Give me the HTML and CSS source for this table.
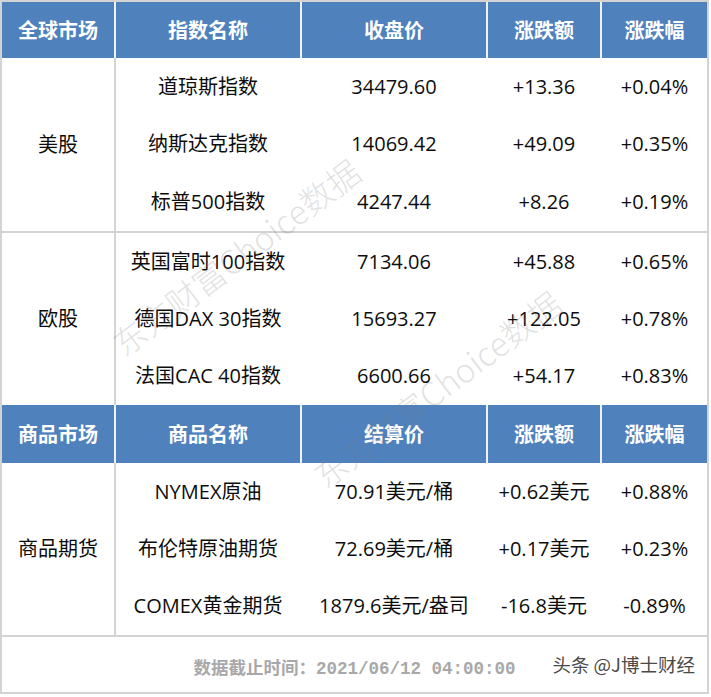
FILE: index.html
```html
<!DOCTYPE html>
<html lang="zh">
<head>
<meta charset="utf-8">
<title>全球市场</title>
<link rel="stylesheet" href="styles.css">
</head>
<body>
<div class="sheet">
  <div class="grid head">
    <div class="c">全球市场</div>
    <div class="c">指数名称</div>
    <div class="c">收盘价</div>
    <div class="c">涨跌额</div>
    <div class="c last">涨跌幅</div>
  </div>
  <div class="grid sec">
    <div class="c market">美股</div>
    <div class="c">道琼斯指数</div><div class="c">34479.60</div><div class="c">+13.36</div><div class="c last">+0.04%</div>
    <div class="c">纳斯达克指数</div><div class="c">14069.42</div><div class="c">+49.09</div><div class="c last">+0.35%</div>
    <div class="c">标普500指数</div><div class="c">4247.44</div><div class="c">+8.26</div><div class="c last">+0.19%</div>
  </div>
  <div class="grid sec split">
    <div class="c market">欧股</div>
    <div class="c">英国富时100指数</div><div class="c">7134.06</div><div class="c">+45.88</div><div class="c last">+0.65%</div>
    <div class="c">德国DAX 30指数</div><div class="c">15693.27</div><div class="c">+122.05</div><div class="c last">+0.78%</div>
    <div class="c">法国CAC 40指数</div><div class="c">6600.66</div><div class="c">+54.17</div><div class="c last">+0.83%</div>
  </div>
  <div class="grid head head2">
    <div class="c">商品市场</div>
    <div class="c">商品名称</div>
    <div class="c">结算价</div>
    <div class="c">涨跌额</div>
    <div class="c last">涨跌幅</div>
  </div>
  <div class="grid sec">
    <div class="c market">商品期货</div>
    <div class="c">NYMEX原油</div><div class="c">70.91美元/桶</div><div class="c">+0.62美元</div><div class="c last">+0.88%</div>
    <div class="c">布伦特原油期货</div><div class="c">72.69美元/桶</div><div class="c">+0.17美元</div><div class="c last">+0.23%</div>
    <div class="c">COMEX黄金期货</div><div class="c">1879.6美元/盎司</div><div class="c">-16.8美元</div><div class="c last">-0.89%</div>
  </div>
  <div class="foot">
    <span class="date">数据截止时间：2021/06/12 04:00:00</span>
    <span class="brand">头条 @J博士财经</span>
  </div>
  <div class="wm wm1">东方财富Choice数据</div>
  <div class="wm wm2">东方财富Choice数据</div>
</div>
</body>
</html>
```

FILE: styles.css
```css
html, body {
  margin: 0;
  padding: 0;
  background: #ffffff;
}

body {
  font-family: "Open Sans", "Noto Sans CJK SC", sans-serif;
  color: #0d0d0d;
}

.sheet {
  position: relative;
  width: 705px;
  border: 2px solid #d3d3d3;
  display: flex;
  flex-direction: column;
  background: #ffffff;
  overflow: hidden;
}

.grid {
  display: grid;
  grid-template-columns: 114px 186px 186px 114px 105px;
}

.c {
  display: flex;
  align-items: center;
  justify-content: center;
  box-sizing: border-box;
  border-right: 2px solid #ffffff;
  white-space: nowrap;
  font-size: 20px;
  line-height: 1;
}

.c.last {
  border-right: 0;
}

.head {
  height: 56px;
  background: #4f81bd;
}

.head .c {
  font-family: "Noto Sans CJK SC", sans-serif;
  color: #ffffff;
  font-weight: 700;
  border-right-color: #eef3fa;
  background: #4f81bd;
}

.head .c.last {
  border-right: 0;
}

.head2 {
  height: 58px;
}

.sec {
  height: 173px;
  grid-template-rows: repeat(3, 1fr);
  background: #ffffff;
}

.sec.split {
  height: 174px;
  border-top: 2px solid #d3d3d3;
  box-sizing: border-box;
}

.head2 + .sec {
  height: 172px;
}

.sec .market {
  grid-row: span 3;
  border-right-color: #d3d3d3;
}

.foot {
  position: relative;
  height: 55px;
  border-top: 2px solid #d3d3d3;
  display: flex;
  align-items: center;
  justify-content: center;
}

.date {
  font-family: "Liberation Mono", "Noto Sans CJK SC", monospace;
  font-size: 17.5px;
  font-weight: 700;
  color: #a8a8a8;
  padding-top: 3px;
}

.brand {
  position: absolute;
  right: 12px;
  top: 18px;
  font-family: "Noto Sans CJK SC", sans-serif;
  font-size: 18.5px;
  color: #4a4a4a;
  line-height: 1;
}

.wm {
  position: absolute;
  font-family: "Noto Sans CJK SC", sans-serif;
  font-size: 33px;
  font-weight: 300;
  color: rgba(120, 120, 120, 0.22);
  white-space: nowrap;
  pointer-events: none;
  line-height: 1;
  transform: translate(-50%, -50%) rotate(-37deg);
}

.wm1 {
  left: 234px;
  top: 255px;
}

.wm2 {
  left: 435px;
  top: 387px;
}
```
